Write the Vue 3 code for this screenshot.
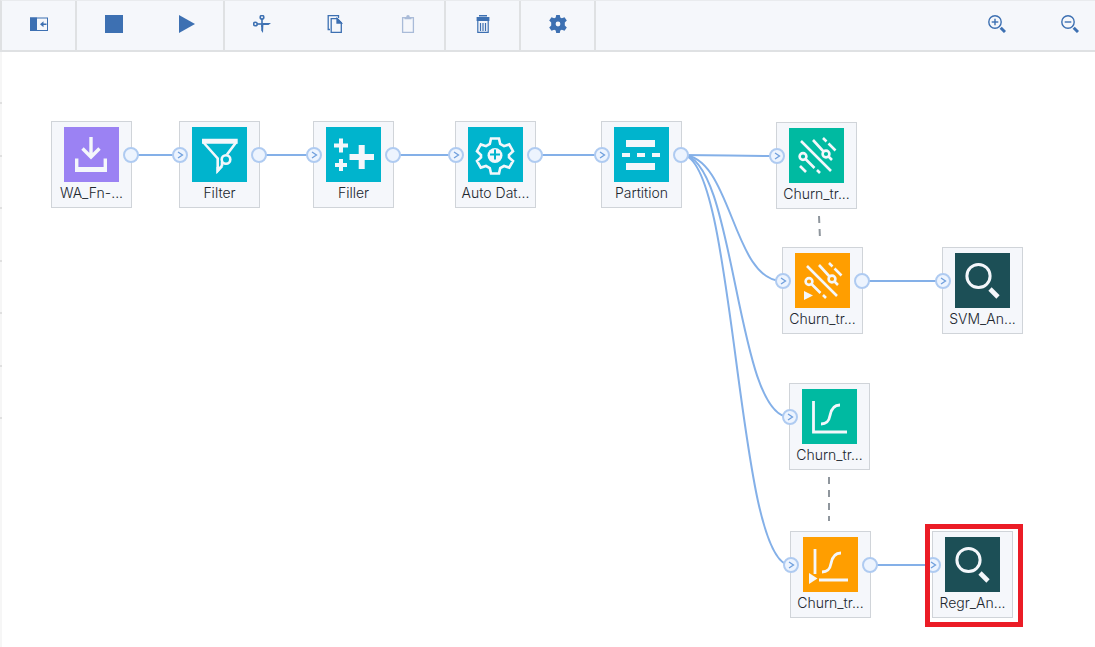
<script setup>
const tools = [
  ['palette'],
  ['stop', 'run'],
  ['cut', 'copy', 'paste'],
  ['delete'],
  ['settings'],
]
const zooms = ['zoom in', 'zoom out']

const nodes = [
  { id: 'data', label: 'WA_Fn-...', x: 51, y: 69, tone: 'violet', icon: 'import', out: true },
  { id: 'filter', label: 'Filter', x: 179, y: 69, tone: 'cyan', icon: 'filter', in: true, out: true },
  { id: 'filler', label: 'Filler', x: 313, y: 69, tone: 'cyan', icon: 'filler', in: true, out: true },
  { id: 'prep', label: 'Auto Dat...', x: 455, y: 69, tone: 'cyan', icon: 'gear', in: true, out: true },
  { id: 'part', label: 'Partition', x: 601, y: 69, tone: 'cyan', icon: 'partition', in: true, out: true },
  { id: 'svm', label: 'Churn_tr...', x: 776, y: 70, tone: 'green', icon: 'svm', in: true },
  { id: 'svmModel', label: 'Churn_tr...', x: 782, y: 195, tone: 'orange', icon: 'svm', model: true, in: true, out: true },
  { id: 'svmOut', label: 'SVM_An...', x: 942, y: 195, tone: 'dark', icon: 'search', in: true },
  { id: 'reg', label: 'Churn_tr...', x: 789, y: 331, tone: 'green', icon: 'regression', in: true },
  { id: 'regModel', label: 'Churn_tr...', x: 790, y: 479, tone: 'orange', icon: 'regression', model: true, in: true, out: true },
  { id: 'regOut', label: 'Regr_An...', x: 932, y: 479, tone: 'dark', icon: 'search', in: true },
]

const links = [
  ['data', 'filter'],
  ['filter', 'filler'],
  ['filler', 'prep'],
  ['prep', 'part'],
  ['part', 'svm'],
  ['part', 'svmModel'],
  ['part', 'reg'],
  ['part', 'regModel'],
  ['svmModel', 'svmOut'],
  ['regModel', 'regOut'],
]

const find = (id) => nodes.find((n) => n.id === id)
const wires = links.map(([from, to]) => {
  const a = find(from)
  const b = find(to)
  const x1 = a.x + 81
  const y1 = a.y + 34
  const x2 = b.x
  const y2 = b.y + 34
  const mid = (x1 + x2) / 2
  return `M${x1} ${y1}C${mid} ${y1} ${mid} ${y2} ${x2} ${y2}`
})
const ticks = [51, 104, 156, 209, 261, 314, 366]
</script>

<template>
  <div class="page">
    <header class="toolbar">
      <div v-for="group in tools" :key="group[0]" class="group">
        <button v-for="t in group" :key="t" type="button" class="tool" :disabled="t === 'paste'" :aria-label="t">
          <svg width="18" height="18" viewBox="0 0 18 18" fill="currentColor">
            <template v-if="t === 'palette'">
              <rect x="0.5" y="3" width="17" height="12.5" fill="none" stroke="currentColor" />
              <rect x="0" y="2.5" width="7" height="13.5" />
              <path d="M10 9.3 13.5 6.3V8.5H16.5V10.1H13.5V12.3Z" />
            </template>
            <rect v-else-if="t === 'stop'" width="18" height="18" />
            <path v-else-if="t === 'run'" d="M1 0 17 9 1 18Z" />
            <g v-else-if="t === 'cut'" fill="none" stroke="currentColor" stroke-width="1.6">
              <circle cx="9" cy="2.3" r="1.8" />
              <circle cx="2.4" cy="9" r="1.8" />
              <path d="M4.2 9H12" />
              <path d="M9 4V12" />
              <path d="M8.2 10H10.4L10 18 8.2 15.500ZM10 8H18L15.500 10H10Z" fill="currentColor" stroke="none" />
            </g>
            <g v-else-if="t === 'copy'" fill="none" stroke="currentColor" stroke-width="1.3">
              <path d="M4 14.5H2.2V0.7H12.5V3" />
              <path d="M5.2 3.7H11.3L15.3 7.7V17.3H5.2Z" />
              <path d="M11 3.5V8H15.5Z" fill="currentColor" />
            </g>
            <g v-else-if="t === 'paste'">
              <rect x="3.6" y="2.7" width="10.8" height="14.7" fill="none" stroke="currentColor" stroke-width="1.3" />
              <path d="M5.5 4.2V2H7.2Q7.2 0 9 0T10.8 2H12.5V4.2Z" />
            </g>
            <g v-else-if="t === 'delete'">
              <path d="M5 0H13V1.5H5ZM2.6 2H15.4V6H2.6Z" />
              <path d="M3.8 6V17.3H14.2V6M6.5 8V16M9 8V16M11.5 8V16" fill="none" stroke="currentColor" stroke-width="1.2" />
            </g>
            <path
              v-else
              fill-rule="evenodd"
              d="M7.2 0H10.8L11.3 2.4 12.8 3.3 15.5 2.2 17.8 5.6 15.8 7.6V10.4L17.8 12.4 15.5 15.8 12.8 14.7 11.3 15.6 10.8 18H7.2L6.7 15.6 5.2 14.7 2.5 15.8 0.2 12.4 2.2 10.4V7.6L0.2 5.6 2.5 2.2 5.2 3.3 6.7 2.4ZM9 6.6A2.4 2.4 0 1 0 9 11.4 2.4 2.4 0 1 0 9 6.6Z"
            />
          </svg>
        </button>
      </div>
      <div class="zooms">
        <button v-for="z in zooms" :key="z" type="button" class="tool" :aria-label="z">
          <svg width="18" height="18" viewBox="0 0 18 18" fill="none" stroke="currentColor" stroke-width="1.4">
            <circle cx="7" cy="7" r="6.2" />
            <path d="M3.7 7H10.3" />
            <path v-if="z === 'zoom in'" d="M7 3.7V10.3" />
            <path d="M12.7 12.7 17 17" stroke-width="3" />
          </svg>
        </button>
      </div>
    </header>

    <main class="canvas">
      <svg class="wires" aria-hidden="true">
        <rect class="edge" x="0" y="0" width="2" height="100%" />
        <rect v-for="t in ticks" :key="t" class="tick" x="0" :y="t - 1" width="2" height="2" />
        <path v-for="w in wires" :key="w" class="wire" :d="w" />
        <path class="dash" d="M819 164 820 187" />
        <path class="dash" d="M829 425V469" />
      </svg>

      <div v-for="n in nodes" :key="n.id" class="node" :style="{ left: n.x + 'px', top: n.y + 'px' }">
        <svg class="tile" :class="n.tone" width="55" height="55" viewBox="0 0 55 55" fill="none" stroke="#f4f7fb" stroke-width="3.4">
          <g v-if="n.icon === 'import'">
            <path d="M27 10V30M18.5 21.5 27 30 35.5 21.5" />
            <path d="M12.7 31.5V43H41.3V31.5" />
            <path d="M11 42.5H43" stroke-width="5" />
          </g>
          <g v-else-if="n.icon === 'filter'">
            <path d="M11.5 15.5 25.7 31.5V43.5L30 38.5V35M44 15.5 35 27.5" stroke-width="2.6" />
            <path d="M10 14.3H45.7" stroke-width="5" />
            <circle cx="34" cy="32.5" r="4.3" stroke-width="2.6" />
            <path d="M24.5 40V47L31 40" fill="#f4f7fb" stroke="none" />
          </g>
          <g v-else-if="n.icon === 'filler'">
            <path d="M23.5 30H48M35.7 18V42" stroke-width="6" />
            <path d="M8 18.5H22M15 11.5V25.5M9 38H21M15 32V44" stroke-width="4" />
          </g>
          <g v-else-if="n.icon === 'gear'">
            <path
              d="M23 11.5H31L32.2 17 36 19.2 41.2 17.4 45 24.2 41 28V30.4L45 34 41.2 40.6 36 39 32.2 41 31 46.5H23L21.8 41 18 39 12.8 40.6 9 34 13 30.4V28L9 24.2 12.8 17.4 18 19.2 21.8 17Z"
              stroke-width="2.6"
            />
            <circle cx="27" cy="28.5" r="7.5" fill="#f4f7fb" stroke="none" />
            <path d="M22 27.5H32M27 22.5V32.5" stroke="#00b4cd" stroke-width="2" />
          </g>
          <path
            v-else-if="n.icon === 'partition'"
            fill="#f4f7fb"
            stroke="none"
            d="M12 13H41V20H12ZM8 26H16V30H8ZM23 26H31V30H23ZM38 26H46V30H38ZM12 36H41V43H12Z"
          />
          <g v-else-if="n.icon === 'svm'" stroke-width="2.6">
            <path d="M12 13 42 43M24 12 34.5 23.5M39.5 28.5 43 32M34 10 37.5 13.5M39.5 15.5 46.5 22.5M16.5 31 25.5 40M28 42 31 45" />
            <circle cx="37" cy="26" r="3.4" />
            <circle cx="14" cy="28.5" r="3.4" />
            <path v-if="n.model" d="M9 38V47L18 42.5Z" fill="#f4f7fb" stroke="none" />
            <path v-else d="M11 38 17 44" />
          </g>
          <g v-else-if="n.icon === 'regression'" stroke-width="2.8">
            <path v-if="n.model" d="M12 12V37M16 43H45" />
            <path v-else d="M11.5 12V43H45" />
            <path d="M19 35C25 35 27 32 28 26.500S31 16 38 16" />
            <path v-if="n.model" d="M6 36V47L14.500 41.500Z" fill="#f4f7fb" stroke="none" />
          </g>
          <g v-else>
            <circle cx="23.5" cy="23" r="11.6" stroke-width="3" />
            <path d="M35 36 43 44" stroke-width="4.6" />
          </g>
        </svg>
        <span class="label">{{ n.label }}</span>
        <svg v-if="n.in" class="port in" width="16" height="16" viewBox="0 0 16 16">
          <circle cx="8" cy="8" r="7" />
          <path d="M6 5 10.500 8 6 11" />
        </svg>
        <svg v-if="n.out" class="port out" width="16" height="16" viewBox="0 0 16 16">
          <circle cx="8" cy="8" r="7" />
        </svg>
      </div>

      <div class="highlight"></div>
    </main>
  </div>
</template>

<style>
body {
  margin: 0;
}
</style>

<style scoped>
.page {
  display: flex;
  flex-direction: column;
  min-height: 100vh;
  overflow: hidden;
  background: #fff;
  font-family: Inter, 'Open Sans', sans-serif;
}
.toolbar {
  display: flex;
  box-sizing: border-box;
  height: 52px;
  border-top: 1px solid #e9ebee;
  border-bottom: 2px solid #dfe1e3;
  border-left: 2px solid #dfe1e3;
  background: #f5f7fb;
}
.group {
  display: flex;
  border-right: 2px solid #dfe1e3;
}
.tool {
  display: flex;
  align-items: center;
  justify-content: center;
  width: 73px;
  height: 46px;
  padding: 0;
  border: 0;
  background: none;
  color: #3d70b2;
}
.tool:disabled {
  color: #a9bbd8;
}
.zooms {
  display: flex;
  margin-left: auto;
  margin-right: -11px;
}
.canvas {
  position: relative;
  flex: 1;
}
.wires {
  position: absolute;
  width: 100%;
  height: 100%;
}
.edge {
  fill: #f6f6f6;
}
.tick {
  fill: #e0e0e0;
}
.wire {
  fill: none;
  stroke: #84b0e8;
  stroke-width: 2;
}
.dash {
  fill: none;
  stroke: #8f969d;
  stroke-width: 2;
  stroke-dasharray: 7 6;
}
.node {
  position: absolute;
  display: flex;
  flex-direction: column;
  align-items: center;
  box-sizing: border-box;
  width: 81px;
  height: 87px;
  padding-top: 5px;
  border: 1px solid #d0d4d9;
  background: #f5f7fb;
}
.tile {
  flex: none;
}
.violet {
  background: #9b82f3;
}
.cyan {
  background: #00b4cd;
}
.green {
  background: #00baa1;
}
.orange {
  background: #ff9e00;
}
.dark {
  background: #1c4f56;
}
.label {
  color: #20262e;
  font-size: 14px;
  font-weight: 300;
  line-height: 22px;
  white-space: nowrap;
}
.port {
  position: absolute;
  top: 25px;
  fill: #edf4fe;
  stroke: #afcbf1;
  stroke-width: 2;
}
.port path {
  fill: none;
  stroke: #6f9fdd;
  stroke-width: 1.3;
}
.in {
  left: -8px;
}
.out {
  right: -8px;
}
.highlight {
  position: absolute;
  left: 925px;
  top: 472px;
  box-sizing: border-box;
  width: 98px;
  height: 103px;
  border: 5px solid #eb1c26;
}
</style>
